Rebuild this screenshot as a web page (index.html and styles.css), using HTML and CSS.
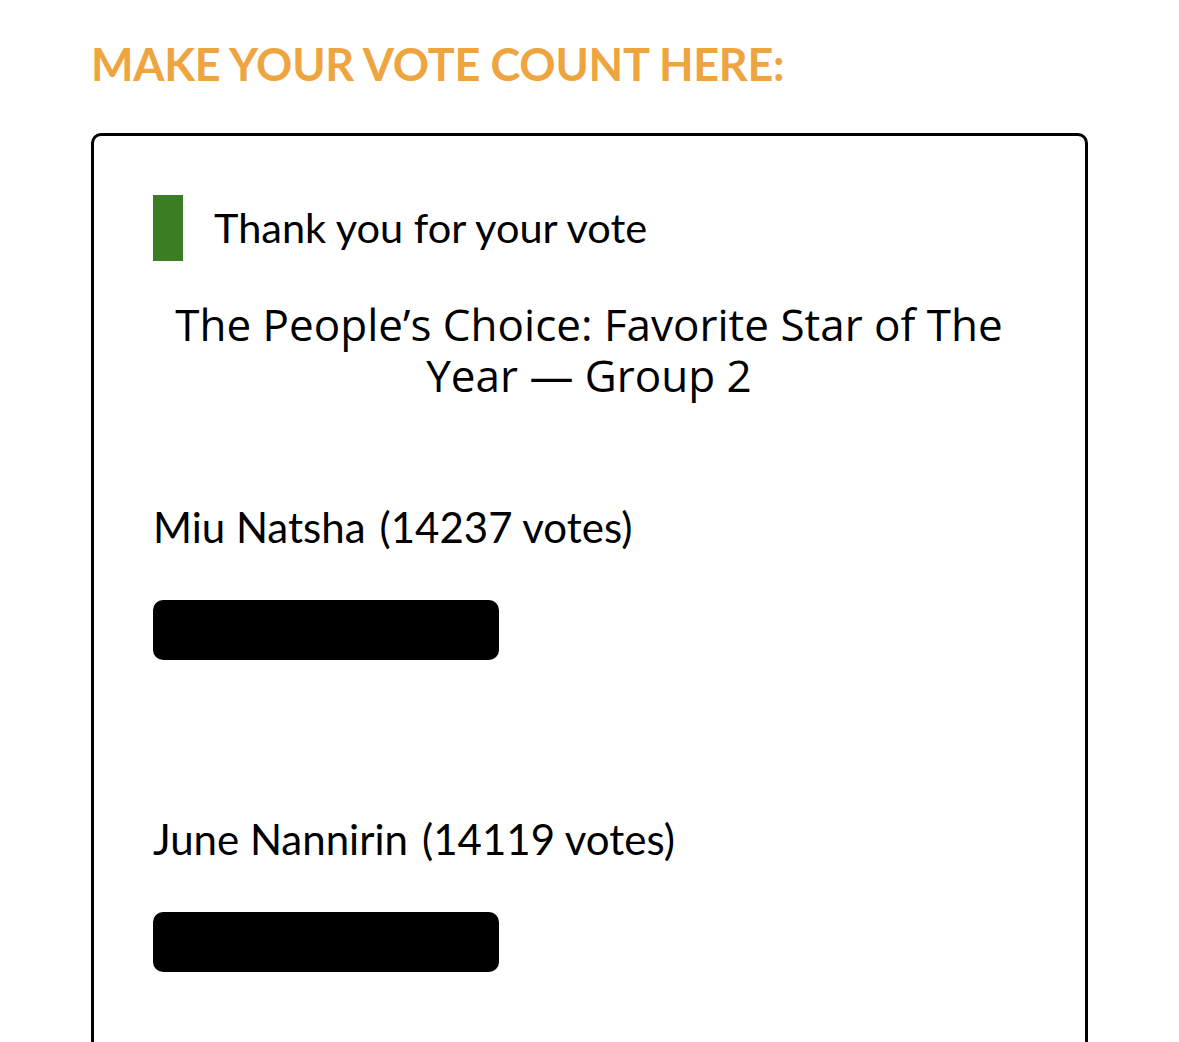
FILE: index.html
```html
<!DOCTYPE html>
<html>
<head>
<meta charset="utf-8">
<link rel="stylesheet" href="styles.css">
</head>
<body>
<main class="page">
  <h2 class="heading">MAKE YOUR VOTE COUNT HERE:</h2>
  <section class="poll">
    <div class="notice">
      <span class="notice-bar"></span>
      <span class="notice-text">Thank you for your vote</span>
    </div>
    <h3 class="poll-title">The People’s Choice: Favorite Star of The Year — Group 2</h3>
    <div class="option">
      <div class="option-label"><span class="option-name">Miu Natsha</span><span class="option-votes">(14237 votes)</span></div>
      <div class="option-bar"></div>
    </div>
    <div class="option">
      <div class="option-label"><span class="option-name">June Nannirin</span><span class="option-votes">(14119 votes)</span></div>
      <div class="option-bar"></div>
    </div>
  </section>
</main>
</body>
</html>
```
FILE: styles.css
```css
html, body {
  margin: 0;
  padding: 0;
  background: #ffffff;
  overflow: hidden;
}
body {
  font-family: "Lato", "Liberation Sans", sans-serif;
  color: #000;
}
.page {
  padding: 38px 91px 0 91px;
}
.heading {
  margin: 0;
  font-family: "Lato", sans-serif;
  font-weight: 700;
  font-size: 45px;
  line-height: 52px;
  color: #eea43f;
  letter-spacing: -0.3px;
}
.poll {
  margin-top: 43px;
  border: 3px solid #000;
  border-radius: 10px;
  padding: 59px 60px 200px 59px;
  height: 1000px;
}
.notice {
  display: flex;
  align-items: center;
  gap: 31px;
}
.notice-bar {
  width: 30px;
  height: 66px;
  background: #3a7d23;
}
.notice-text {
  font-size: 41.5px;
  line-height: 48px;
  margin-top: -3px;
}
.poll-title {
  margin: 38px 0 0 0;
  font-family: "Open Sans", sans-serif;
  font-weight: 400;
  font-size: 44px;
  line-height: 51px;
  text-align: center;
}
.option {
  margin-top: 102px;
}
.option + .option {
  margin-top: 155px;
}
.option-label {
  font-size: 42px;
  line-height: 48px;
  display: flex;
  gap: 14px;
}
.option-bar {
  margin-top: 49px;
  width: 346px;
  height: 60px;
  background: #000;
  border-radius: 10px;
}
```
